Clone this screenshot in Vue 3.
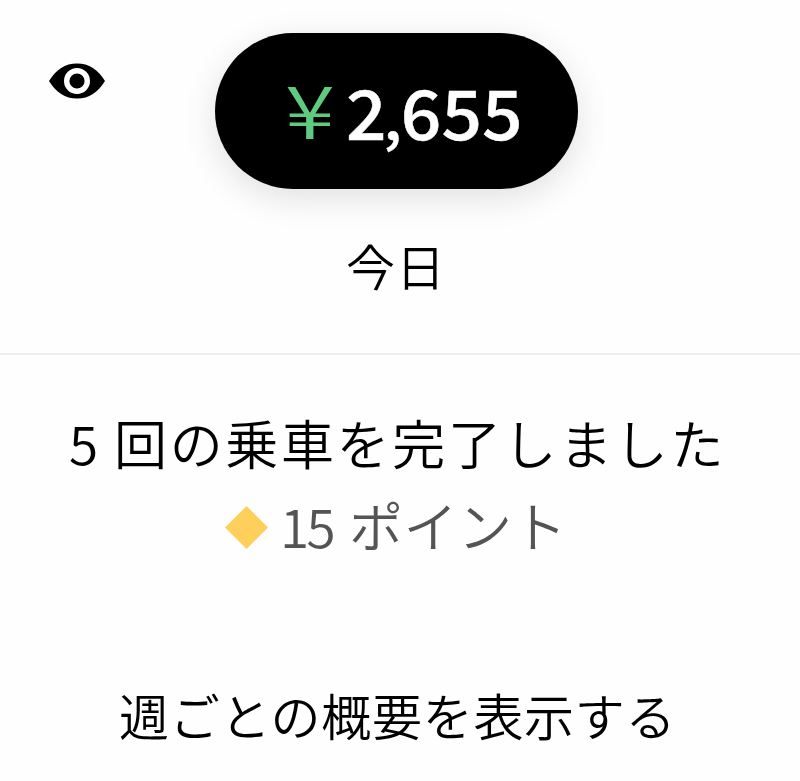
<script setup>
const summary = {
  currency: '¥',
  thousands: '2',
  hundreds: '655',
  day: '今日',
  count: '5',
  trips: '回の乗車を完了しました',
  pointCount: '15',
  points: 'ポイント',
  weekly: '週ごとの概要を表示する'
}
</script>

<template>
  <main class="earnings">
    <header class="top">
      <svg class="eye" viewBox="0 0 56 36" aria-hidden="true">
        <path d="M0 18C7 6.5 16 .5 28 .5S49 6.5 56 18C49 29.500 40 35.500 28 35.500S7 29.500 0 18Z" fill="#000" />
        <circle cx="28" cy="18" r="10.3" fill="#000" stroke="#fff" stroke-width="5.4" />
      </svg>
      <div class="pill">
        <span class="yen">{{ summary.currency }}</span>
        <span class="amount"><span class="thousands">{{ summary.thousands }}</span><span class="comma">,</span>{{ summary.hundreds }}</span>
      </div>
    </header>
    <h1 class="day">{{ summary.day }}</h1>
    <section class="details">
      <p class="trips"><span class="count">{{ summary.count }}</span><span>{{ summary.trips }}</span></p>
      <p class="points">
        <svg class="diamond" viewBox="0 0 42 42" aria-hidden="true"><path d="M21 0L42 21L21 42L0 21Z" fill="#ffcf5c" /></svg>
        <span class="point-count">{{ summary.pointCount }}</span><span class="points-text">{{ summary.points }}</span>
      </p>
      <a class="weekly">{{ summary.weekly }}</a>
    </section>
  </main>
</template>

<style>
body { background: #fefefe; }
</style>

<style scoped>
.earnings {
  width: 800px;
  height: 781px;
  overflow: hidden;
  box-sizing: border-box;
  font-family: "Noto Sans CJK JP", sans-serif;
  font-weight: 350;
  color: #000;
  white-space: nowrap;
}
.top {
  display: flex;
  align-items: flex-start;
  padding: 33px 0 0 49px;
}
.eye { width: 56px; height: 36px; margin: 30px 110px 0 0; flex: none; }
.pill {
  display: flex;
  width: 363px;
  height: 156px;
  box-sizing: border-box;
  padding-left: 70px;
  border-radius: 78px;
  background: #000;
  box-shadow: 0 9px 34px rgba(0, 0, 0, .12);
}
.yen {
  width: 61px;
  color: #5fcb80;
  font-size: 73px;
  line-height: 149px;
  transform: scaleX(1.24);
  transform-origin: left center;
}
.amount {
  color: #fff;
  font-size: 69px;
  font-weight: 500;
  line-height: 155px;
  letter-spacing: .1px;
  -webkit-text-stroke: .5px #fff;
  transform: scaleX(1.03);
  transform-origin: left center;
}
.thousands { letter-spacing: -3px; }
.comma { font-size: 60px; line-height: 1; letter-spacing: -1px; }
.day {
  margin: 0;
  padding: 41px 0 0 346px;
  height: 164px;
  box-sizing: border-box;
  font-size: 49px;
  font-weight: 350;
  line-height: 69px;
  letter-spacing: 1px;
}
.details {
  display: flex;
  flex-direction: column;
  border-top: 2px solid #f0f0f0;
}
.trips { display: flex; margin: 0; padding: 47px 0 0 69px; font-size: 53px; line-height: 80px; letter-spacing: 2.65px; }
.count { width: 45px; }
.points { display: flex; align-items: center; margin: 0; padding: 3px 0 0 225px; font-size: 53px; line-height: 80px; color: #545454; }
.diamond { width: 43px; height: 43px; margin: 4px 12px 0 0; }
.point-count { width: 69px; letter-spacing: -2.7px; }
.points-text { padding-bottom: 1px; font-size: 54px; line-height: 75px; letter-spacing: .5px; }
.weekly { padding: 109px 0 0 119px; font-size: 50px; line-height: 80px; letter-spacing: .7px; }
</style>
